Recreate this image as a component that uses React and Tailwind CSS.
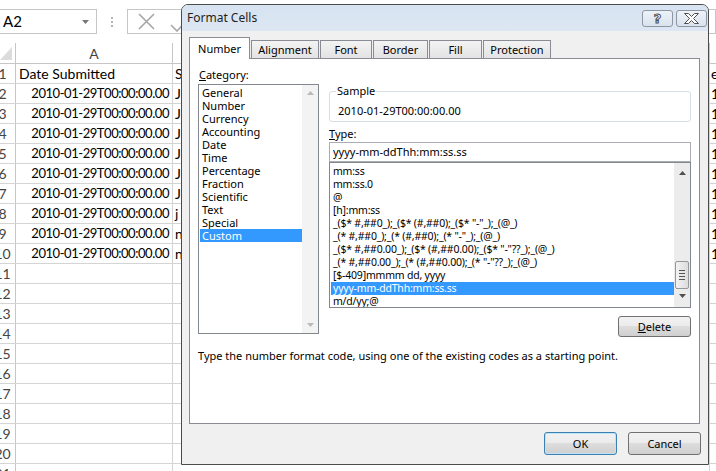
import React from "react";

const CATS = ["General","Number","Currency","Accounting","Date","Time","Percentage","Fraction","Scientific","Text","Special","Custom"];
const TYPES = [
  "mm:ss",
  "mm:ss.0",
  "@",
  "[h]:mm:ss",
  '_($* #,##0_);_($* (#,##0);_($* "-"_);_(@_)',
  '_(* #,##0_);_(* (#,##0);_(* "-"_);_(@_)',
  '_($* #,##0.00_);_($* (#,##0.00);_($* "-"??_);_(@_)',
  '_(* #,##0.00_);_(* (#,##0.00);_(* "-"??_);_(@_)',
  "[$-409]mmmm dd, yyyy",
  "yyyy-mm-ddThh:mm:ss.ss",
  "m/d/yy;@",
];
const ROWS = Array.from({ length: 21 }, (_, i) => i + 1);

function cellB(n) {
  if (n === 1) return "S";
  if (n <= 7) return "J";
  if (n === 8) return "j";
  if (n <= 10) return "n";
  return "";
}
function cellC(n) {
  if (n === 1) return "e";
  if (n <= 10) return "1";
  return "";
}

function Arrow({ up, color }) {
  return (
    <svg width="7" height="4" viewBox="0 0 7 4">
      <path d={up ? "M0 4L3.5 0L7 4Z" : "M0 0H7L3.5 4Z"} fill={color} />
    </svg>
  );
}

export default function App() {
  return (
    <div className="relative h-[471px] w-[716px] overflow-hidden bg-white font-['Lato',sans-serif] text-[14px] text-black">
      {/* formula bar */}
      <div className="flex h-[43px] items-center">
        <div className="relative flex h-[25px] w-[97px] items-center border border-l-0 border-[#c6c6c6] pl-[3px] text-[15px]">
          A2
          <div className="absolute right-[7px] top-[10px] flex">
            <Arrow color="#777" />
          </div>
        </div>
        <div className="ml-[14px] flex flex-col gap-[2px]">
          <div className="h-[2px] w-[2px] bg-[#b4b4b4]" />
          <div className="h-[2px] w-[2px] bg-[#b4b4b4]" />
          <div className="h-[2px] w-[2px] bg-[#b4b4b4]" />
        </div>
        <div className="ml-[14px] flex h-[25px] flex-1 items-center border border-[#c6c6c6] pl-[10px]">
          <svg width="60" height="20" viewBox="0 0 60 20">
            <path d="M1 2L16 17M16 2L1 17" stroke="#a6a6a6" strokeWidth="1.6" fill="none" />
            <path d="M33 13L39 19L52 5" stroke="#a6a6a6" strokeWidth="1.6" fill="none" />
          </svg>
        </div>
      </div>

      {/* column header */}
      <div className="flex h-[21px] border-b border-[#c6c6c6]">
        <div className="relative -ml-[10px] w-[26px] shrink-0 border-r border-[#c6c6c6]">
          <svg className="absolute left-[10px] top-[3px]" width="13" height="15" viewBox="0 0 13 15">
            <path d="M12 1V14H0Z" fill="#dcdcdc" />
          </svg>
        </div>
        <div className="flex w-[157px] shrink-0 items-center justify-center border-r border-[#c6c6c6] text-[#444]">A</div>
        <div className="w-[537px] shrink-0 border-r border-[#c6c6c6]" />
        <div className="flex-1" />
      </div>

      {/* rows */}
      {ROWS.map((n) => (
        <div key={n} className="flex h-[20px] border-b border-[#d4d4d4]">
          <div className="-ml-[10px] flex w-[26px] shrink-0 items-center justify-center border-r border-[#c6c6c6] text-[#444]">{n}</div>
          <div
            className={
              n === 1
                ? "flex w-[157px] shrink-0 items-center justify-start border-r border-[#d4d4d4] pl-[3px]"
                : "flex w-[157px] shrink-0 items-center justify-end border-r border-[#d4d4d4] pr-[3px] text-[13px] tracking-[-0.45px]"
            }
          >
            {n === 1 ? "Date Submitted" : n <= 10 ? "2010-01-29T00:00:00.00" : ""}
          </div>
          <div className="flex w-[537px] shrink-0 items-center border-r border-[#d4d4d4] pl-[2px]">{cellB(n)}</div>
          <div className="flex flex-1 items-center pl-[1px]">{cellC(n)}</div>
        </div>
      ))}

      {/* dialog */}
      <div className="absolute left-[181px] top-[4px] flex h-[461px] w-[528px] flex-col rounded-t-[7px] border border-[#4b4b4b] bg-[#f0f0f0] font-['Noto_Sans',sans-serif] text-[11px] text-black">
        {/* title bar */}
        <div className="flex h-[26px] shrink-0 items-start rounded-t-[6px] bg-gradient-to-b from-[#d7e3f1] to-[#dde7f3]">
          <div className="pl-[5px] pt-[5px] text-[12px] leading-[16px] text-[#1e1e1e]">Format Cells</div>
          <div className="ml-auto mr-[1px] mt-[5px] flex gap-[3px]">
            <div className="flex h-[17px] w-[31px] items-center justify-center rounded-[3px] border border-[#8d96a3] bg-gradient-to-b from-[#eef3f9] to-[#d9e2ed]">
              <span className="font-['DejaVu_Sans',sans-serif] text-[13px] font-bold leading-[13px] text-white [-webkit-text-stroke:1px_#4f4f4f]">?</span>
            </div>
            <div className="flex h-[17px] w-[31px] items-center justify-center rounded-[3px] border border-[#8d96a3] bg-gradient-to-b from-[#eef3f9] to-[#d9e2ed]">
              <svg width="15" height="11" viewBox="0 0 15 11">
                <path
                  d="M0.5 0.5H4.5L7.5 3.5L10.5 0.5H14.5L9.5 5.5L14.5 10.5H10.5L7.5 7.5L4.5 10.5H0.5L5.5 5.5Z"
                  fill="#fff"
                  stroke="#4f4f4f"
                  strokeWidth="1"
                />
              </svg>
            </div>
          </div>
        </div>

        {/* body */}
        <div className="flex flex-1 flex-col px-[7px]">
          {/* tabs */}
          <div className="mt-[6px] flex h-[21px] items-end gap-[1px]">
            <div className="relative z-10 -mb-px flex h-[22px] w-[61px] items-start justify-center border border-b-0 border-[#898c95] bg-white pt-[4px] leading-[14px]">
              Number
            </div>
            {[
              ["Alignment", "w-[68px]"],
              ["Font", "w-[52px]"],
              ["Border", "w-[55px]"],
              ["Fill", "w-[53px]"],
              ["Protection", "w-[68px]"],
            ].map(([t, w]) => (
              <div
                key={t}
                className={`flex h-[18px] items-center justify-center border border-b-0 border-[#898c95] bg-gradient-to-b from-[#f3f3f3] to-[#e3e3e3] leading-[14px] ${w}`}
              >
                {t}
              </div>
            ))}
          </div>

          {/* panel */}
          <div className="flex h-[366px] w-[511px] flex-col border border-[#898c95] bg-white">
            <div className="flex gap-[10px] pl-[8px]">
              {/* category column */}
              <div className="flex flex-col pt-[9px]">
                <div className="pl-[1px] leading-[14px]">
                  <span className="underline">C</span>ategory:
                </div>
                <div className="mt-[2px] flex h-[250px] w-[121px] border border-[#828790] bg-white">
                  <div className="flex flex-1 flex-col pl-[1px] pt-[1px]">
                    {CATS.map((c) => (
                      <div
                        key={c}
                        className={
                          c === "Custom"
                            ? "h-[13px] bg-[#3399ff] pl-[2px] leading-[13px] text-white"
                            : "h-[13px] pl-[2px] leading-[13px]"
                        }
                      >
                        {c}
                      </div>
                    ))}
                  </div>
                  <div className="flex w-[16px] flex-col items-center justify-between bg-[#f3f3f3] py-[6px]">
                    <Arrow up color="#b9b9b9" />
                    <Arrow color="#b9b9b9" />
                  </div>
                </div>
              </div>

              {/* right column */}
              <div className="flex w-[362px] flex-col pt-[25px]">
                <fieldset className="rounded-[3px] border border-[#d5dfe5] pb-[3px] pl-[8px]">
                  <legend className="-ml-[2px] px-[1px] leading-[14px]">Sample</legend>
                  <div className="pt-[6px] leading-[14px]">2010-01-29T00:00:00.00</div>
                </fieldset>
                <div className="mt-[5px] leading-[14px]">
                  <span className="underline">T</span>ype:
                </div>
                <div className="mt-[1px] flex h-[20px] items-center border border-[#abadb3] pl-[3px]">
                  yyyy-mm-ddThh:mm:ss.ss
                </div>
                <div className="flex h-[146px] border border-[#828790] bg-white">
                  <div className="flex flex-1 flex-col overflow-hidden pl-[1px] pt-[2px] text-[10.5px] tracking-[-0.2px]">
                    {TYPES.map((t) => (
                      <div
                        key={t}
                        className={
                          t === "yyyy-mm-ddThh:mm:ss.ss"
                            ? "h-[13px] shrink-0 whitespace-pre bg-[#3399ff] pl-[2px] leading-[13px] text-white"
                            : "h-[13px] shrink-0 whitespace-pre pl-[2px] leading-[13px]"
                        }
                      >
                        {t}
                      </div>
                    ))}
                  </div>
                  <div className="flex w-[16px] flex-col items-center bg-[#ececec] pt-[8px]">
                    <Arrow up color="#505050" />
                    <div className="mt-[86px] flex h-[28px] w-[14px] flex-col items-center justify-center gap-[2px] rounded-[2px] border border-[#979797] bg-gradient-to-r from-[#f3f3f3] to-[#dcdcdc]">
                      <div className="h-px w-[6px] bg-[#555]" />
                      <div className="h-px w-[6px] bg-[#555]" />
                      <div className="h-px w-[6px] bg-[#555]" />
                      <div className="h-px w-[6px] bg-[#555]" />
                    </div>
                    <div className="mt-[5px]">
                      <Arrow color="#505050" />
                    </div>
                  </div>
                </div>
                <div className="mt-[8px] flex justify-end">
                  <div className="flex h-[21px] w-[73px] items-center justify-center rounded-[3px] border border-[#707070] bg-[linear-gradient(#f2f2f2,#ebebeb_50%,#dddddd_50%,#cfcfcf)] leading-[14px]">
                    <span className="underline">D</span>elete
                  </div>
                </div>
              </div>
            </div>
            <div className="mt-[12px] pl-[8px] leading-[14px]">
              Type the number format code, using one of the existing codes as a starting point.
            </div>
          </div>

          {/* footer */}
          <div className="mt-[8px] flex justify-end gap-[11px]">
            <div className="flex h-[23px] w-[73px] items-center justify-center rounded-[3px] border border-[#3c7fb1] bg-[linear-gradient(#f2f2f2,#ebebeb_50%,#dddddd_50%,#cfcfcf)] leading-[14px] shadow-[inset_0_0_0_1px_#bde4f7]">
              OK
            </div>
            <div className="flex h-[23px] w-[73px] items-center justify-center rounded-[3px] border border-[#707070] bg-[linear-gradient(#f2f2f2,#ebebeb_50%,#dddddd_50%,#cfcfcf)] leading-[14px]">
              Cancel
            </div>
          </div>
        </div>
      </div>
    </div>
  );
}
